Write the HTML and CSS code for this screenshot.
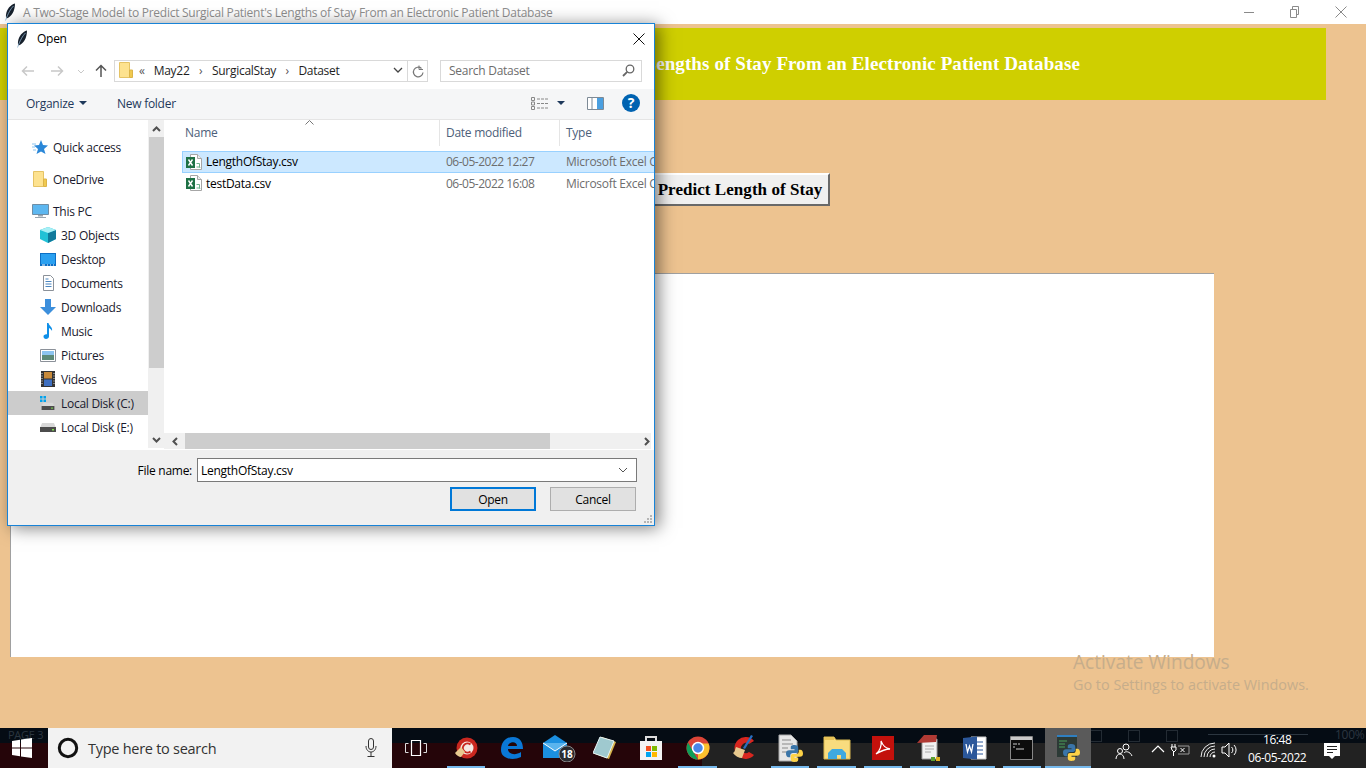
FILE: index.html
```html
<!DOCTYPE html>
<html>
<head>
<meta charset="utf-8">
<title>A Two-Stage Model to Predict Surgical Patient's Lengths of Stay From an Electronic Patient Database</title>
<link rel="stylesheet" href="styles.css">
</head>
<body>
<svg class="defs" width="0" height="0">
<symbol id="feather" viewBox="0 0 12 18"><path d="M11 .5C6.500 1.500 2.500 6.500 2 12c-.2 1.500 0 2.500.5 3.500C7.500 14 11 8 11 .5z" fill="#16202c"/><path d="M9.500 3C6.500 6 4 10.500 1.500 17.500" stroke="#8fb2d0" stroke-width=".8" fill="none"/></symbol>
<symbol id="folder" viewBox="0 0 14 16"><path d="M.5 .5h10v15H.5z" fill="#fde28f" stroke="#e5c365"/><path d="M10.500 8h3v7.500h-3z" fill="#f0c94f" stroke="#dcb448"/></symbol>
<symbol id="xls" viewBox="0 0 16 16"><path d="M4.500 .5h7l4 4v11h-11z" fill="#fff" stroke="#a6a6a6"/><path d="M11.500 .5v4h4" fill="#eee" stroke="#a6a6a6"/><path d="M0 3h9v11H0z" fill="#1e7145"/><path d="M2.500 5.500l4 6M6.500 5.500l-4 6" stroke="#fff" stroke-width="1.400"/><path d="M10.500 9.500h3v3.500h-3M13.500 13l.6 1" stroke="#6fb28c" fill="none"/></symbol>
<symbol id="drive" viewBox="0 0 16 10"><path d="M2 1h12l2 5H0z" fill="#d8d8d8"/><path d="M0 5h16v5H0z" fill="#4c4c4c"/><path d="M12 7h2v1.500h-2z" fill="#7de04c"/></symbol>
<symbol id="pyblob" viewBox="0 0 16 16"><path d="M8 0C5 0 4.500 1 4.500 2.500V4H8v1H3C1 5 0 6 0 8s1 3.500 2.500 3.500H4V10c0-1.500 1-2.500 2.500-2.500h3c1.200 0 2-.8 2-2V2.500C11.500 1 10.500 0 8 0z" fill="#3a75a8"/><path d="M8 16c3 0 3.500-1 3.500-2.500V12H8v-1h5c2 0 3-1 3-3s-1-3.500-2.500-3.500H12V6c0 1.500-1 2.500-2.500 2.500h-3c-1.200 0-2 .8-2 2v3C4.500 15 5.500 16 8 16z" fill="#fdd247"/></symbol>
</svg>

<div class="screen">
  <div class="titlebar">
    <svg class="tb-feather"><use href="#feather"/></svg>
    <span class="tb-title">A Two-Stage Model to Predict Surgical Patient's Lengths of Stay From an Electronic Patient Database</span>
    <div class="wincontrols">
      <svg width="12" height="12" viewBox="0 0 12 12"><path d="M1 6.500h10" stroke="#8a8a8a"/></svg>
      <svg width="12" height="12" viewBox="0 0 12 12"><path d="M1.500 3.500h6v8h-6zM3.500 3.500V.5h6v8h-2" stroke="#8a8a8a" fill="none"/></svg>
      <svg width="12" height="12" viewBox="0 0 12 12"><path d="M.5 .5l11 11M11.500 .5l-11 11" stroke="#8a8a8a"/></svg>
    </div>
  </div>

  <div class="app">
    <div class="banner">A Two-Stage Model to Predict Surgical Patient's Lengths of Stay From an Electronic Patient Database</div>
    <div class="btnrow"><button class="tkbtn">Predict Length of Stay</button></div>
    <div class="output"></div>
    <div class="watermark">
      <div class="wm-big">Activate Windows</div>
      <div class="wm-small">Go to Settings to activate Windows.</div>
    </div>
  </div>

  <div class="taskbar">
    <div class="ghost">
      <span class="ghost-page">PAGE 3</span>
      <span class="ghost-zoom">
        <i class="ghost-box"></i><i class="ghost-box"></i><i class="ghost-box"></i>
        <i class="ghost-slider"></i>
        <b>100%</b>
      </span>
    </div>
    <div class="start">
      <svg width="20" height="20" viewBox="0 0 20 20"><path d="M0 3l8-1.200V9.500H0zM9 1.600L20 0v9.500H9zM0 10.500h8v7.700L0 17zM9 10.500h11V20L9 18.400z" fill="#fff"/></svg>
    </div>
    <div class="searchbox">
      <svg width="22" height="22" viewBox="0 0 22 22"><circle cx="11" cy="11" r="8.700" fill="none" stroke="#111" stroke-width="3"/></svg>
      <span class="search-text">Type here to search</span>
      <svg class="mic" width="12" height="20" viewBox="0 0 12 20"><rect x="3.500" y=".5" width="5" height="11" rx="2.500" fill="none" stroke="#333"/><path d="M1 8c0 8 10 8 10 0M6 14v4M2.500 18.500h7" fill="none" stroke="#333"/></svg>
    </div>
    <div class="taskview">
      <svg width="22" height="18" viewBox="0 0 22 18"><path d="M6.500 1.500h9v15h-9z" fill="none" stroke="#fff" stroke-width="1.200"/><path d="M3.500 4.500H.5v9h3M18.500 4.500h3v9h-3" fill="none" stroke="#ddd"/></svg>
    </div>
    <div class="apps">
      <div class="app-icon open">
        <svg width="24" height="24" viewBox="0 0 24 24"><circle cx="13" cy="12" r="10.500" fill="#c9271f"/><circle cx="13" cy="12" r="6.500" fill="#f4e9e4"/><path d="M16.500 8.500a4.600 4.600 0 1 0 0 7" fill="none" stroke="#c9271f" stroke-width="2"/><path d="M1 17l6-6 4 5-4 5c-2 0-5-2-6-4z" fill="#e8c98f"/></svg>
      </div>
      <div class="app-icon">
        <svg width="24" height="24" viewBox="0 0 24 24"><path d="M1 14C1 6 6 1 13 1c7 0 10 5 10 12H8c0 5 7 7 13 3v5c-8 4-20 2-20-7zm7-4h9c0-5-8-5-9 0z" fill="#0a78d7"/></svg>
      </div>
      <div class="app-icon">
        <svg width="34" height="28" viewBox="0 0 34 28"><path d="M1 9l12-8 12 8v15H1z" fill="#1b8fe0"/><path d="M1 9l12 8 12-8" fill="#5ab4ee" stroke="#fff"/><circle cx="25" cy="20" r="8" fill="#2b2b30" stroke="#888"/><text x="25" y="24" class="badge" text-anchor="middle">18</text></svg>
      </div>
      <div class="app-icon">
        <svg width="24" height="24" viewBox="0 0 24 24"><path d="M9 1l14 5-7 17L2 18z" fill="#d9b64f"/><path d="M7 1l14 4-7 17L0 17z" fill="#9fc9cf" stroke="#e8f4f5"/></svg>
      </div>
      <div class="app-icon">
        <svg width="24" height="26" viewBox="0 0 24 26"><path d="M7 7V2h10v5" fill="none" stroke="#ddd" stroke-width="2"/><path d="M1 6h22v19H1z" fill="#f3f3f3"/><path d="M7 11h5v5H7z" fill="#f25022"/><path d="M13 11h5v5h-5z" fill="#7fba00"/><path d="M7 17h5v5H7z" fill="#00a4ef"/><path d="M13 17h5v5h-5z" fill="#ffb900"/></svg>
      </div>
      <div class="app-icon open">
        <svg width="24" height="24" viewBox="0 0 24 24"><circle cx="12" cy="12" r="11.500" fill="#db4437"/><path d="M12 23.500A11.500 11.500 0 0 0 22.500 7.500H12z" fill="#fbc02d"/><path d="M12 23.500A11.500 11.500 0 0 1 2 6.500L8 17z" fill="#0f9d58"/><circle cx="12" cy="12" r="5.500" fill="#4a86e8" stroke="#fff" stroke-width="1.500"/></svg>
      </div>
      <div class="app-icon">
        <svg width="26" height="26" viewBox="0 0 26 26"><path d="M23 6a11 11 0 1 0 0 14l-5-3a5 5 0 1 1 0-8z" fill="#d8261f"/><path d="M20 0l2 1-8 13-2-1z" fill="#2a6fc0"/><path d="M5 12l9 3-3 8c-3 0-7-2-9-5 2-1 2-4 3-6z" fill="#e8c98f"/></svg>
      </div>
      <div class="app-icon open">
        <svg width="26" height="28" viewBox="0 0 26 28"><path d="M2 1h12l6 6v20H2z" fill="#e6e6e6" stroke="#aaa"/><path d="M5 6h9M5 10h11M5 14h6M5 18h6" stroke="#8a8a8a"/><svg x="9" y="11" width="17" height="17"><use href="#pyblob"/></svg></svg>
      </div>
      <div class="app-icon open">
        <svg width="28" height="24" viewBox="0 0 28 24"><path d="M1 1h10l2 3h14v19H1z" fill="#f9dc7e" stroke="#d9b850"/><path d="M1 1h10v3H1z" fill="#e8c358"/><path d="M9 13h10l4 4v6h-5v-4h-4v4H5v-6z" fill="#3fa9e0"/></svg>
      </div>
      <div class="app-icon open">
        <svg width="22" height="24" viewBox="0 0 22 24"><path d="M0 0h22v24H0z" fill="#c3110c"/><path d="M4 18c4-3 6-9 5-13 2 5 4 7 9 8-5 0-9 2-14 5z" fill="none" stroke="#fff" stroke-width="1.300"/></svg>
      </div>
      <div class="app-icon open">
        <svg width="26" height="28" viewBox="0 0 26 28"><path d="M6 5h15v20H6z" fill="#f1f1f1" stroke="#999"/><path d="M9 12h9M9 15h9M9 18h6" stroke="#aaa"/><path d="M1 9L8 1h13l-1 7z" fill="#b03a34"/><path d="M15 23h4v4h-4z" fill="#5a9e2f"/><path d="M20 23h4v4h-4z" fill="#e0b020"/></svg>
      </div>
      <div class="app-icon open">
        <svg width="24" height="24" viewBox="0 0 24 24"><path d="M8 1h15v22H8z" fill="#fff" stroke="#ccc"/><path d="M12 6h8M12 10h8M12 14h8M12 18h8" stroke="#2b579a"/><path d="M0 2l14-1.500v23L0 22z" fill="#2b579a"/><path d="M3 8l1.500 8 2-6 2 6L10 8" fill="none" stroke="#fff" stroke-width="1.300"/></svg>
      </div>
      <div class="app-icon open">
        <svg width="23" height="24" viewBox="0 0 23 24"><path d="M.5 .5h22v23H.5z" fill="#0c0c0c" stroke="#888"/><path d="M1 1h21v3H1z" fill="#c9c9c9"/><path d="M3 8h4M8 8h2M3 11h2M6 13h8" stroke="#ccc"/></svg>
      </div>
      <div class="app-icon open active">
        <svg width="24" height="28" viewBox="0 0 24 28"><path d="M1 1h20v22H1z" fill="#2c3a36"/><path d="M1 1h20v2H1z" fill="#2f7fc0"/><path d="M3 7h8M3 10h6M3 13h6" stroke="#4aa05a"/><svg x="7" y="10" width="17" height="17"><use href="#pyblob"/></svg></svg>
      </div>
    </div>
    <div class="tray">
      <svg class="tray-people" width="18" height="18" viewBox="0 0 18 18"><circle cx="11" cy="5" r="3" fill="none" stroke="#fff"/><circle cx="5" cy="9" r="2.500" fill="none" stroke="#fff"/><path d="M1 17c0-3 2-5 4-5s4 2 4 5M9 11c1-2 6-2 8 3" fill="none" stroke="#fff"/></svg>
      <svg class="tray-caret" width="14" height="8" viewBox="0 0 14 8"><path d="M1 7l6-6 6 6" fill="none" stroke="#fff" stroke-width="1.200"/></svg>
      <svg class="tray-batt" width="20" height="14" viewBox="0 0 20 14"><path d="M2 1v3M5 1v3M1 4h5v3l-2 2-2-2zM3.500 9v4" fill="none" stroke="#fff"/><path d="M8 3h11v8H8" fill="none" stroke="#999"/><path d="M10.500 5l4 4M14.500 5l-4 4" stroke="#fff"/></svg>
      <svg class="tray-wifi" width="16" height="16" viewBox="0 0 16 16"><path d="M1 15A14 14 0 0 1 15 1M4 15A11 11 0 0 1 15 4M7 15a8 8 0 0 1 8-8M10 15a5 5 0 0 1 5-5" fill="none" stroke="#eee"/><circle cx="14" cy="14" r="1.500" fill="#fff"/></svg>
      <svg class="tray-vol" width="18" height="16" viewBox="0 0 18 16"><path d="M1 5h3l4-4v14l-4-4H1z" fill="none" stroke="#fff"/><path d="M10.500 5a4 4 0 0 1 0 6M13 3a7 7 0 0 1 0 10" fill="none" stroke="#fff"/></svg>
      <div class="clock"><span>16:48</span><span>06-05-2022</span></div>
      <svg class="tray-action" width="16" height="17" viewBox="0 0 16 17"><path d="M0 0h16v13h-5l-3 3-3-3H0z" fill="#fff"/><path d="M3 3.500h10M3 6.500h10M3 9.500h6" stroke="#222"/></svg>
    </div>
  </div>

  <div class="dialog">
    <div class="dlg-title">
      <svg class="dlg-feather"><use href="#feather"/></svg>
      <span class="dlg-name">Open</span>
      <svg class="dlg-close" width="12" height="12" viewBox="0 0 12 12"><path d="M.5 .5l11 11M11.500 .5l-11 11" stroke="#111"/></svg>
    </div>
    <div class="dlg-nav">
      <svg class="nav-back" width="14" height="12" viewBox="0 0 14 12"><path d="M13 6H2M6 1.500L1.500 6 6 10.500" fill="none" stroke="#c8c8c8" stroke-width="1.500"/></svg>
      <svg class="nav-fwd" width="14" height="12" viewBox="0 0 14 12"><path d="M1 6h11M8 1.500L12.500 6 8 10.500" fill="none" stroke="#c8c8c8" stroke-width="1.500"/></svg>
      <svg class="nav-drop" width="8" height="5" viewBox="0 0 8 5"><path d="M1 1l3 3 3-3" fill="none" stroke="#c8c8c8"/></svg>
      <svg class="nav-up" width="12" height="14" viewBox="0 0 12 14"><path d="M6 13V2M1 6.500L6 1.500l5 5" fill="none" stroke="#555" stroke-width="1.500"/></svg>
      <div class="address">
        <svg class="addr-folder" width="14" height="16"><use href="#folder"/></svg>
        <span class="crumb-more">«</span>
        <span>May22</span><span class="crumb-sep">›</span>
        <span>SurgicalStay</span><span class="crumb-sep">›</span>
        <span>Dataset</span>
        <svg class="addr-chev" width="10" height="6" viewBox="0 0 10 6"><path d="M1 1l4 4 4-4" fill="none" stroke="#444" stroke-width="1.300"/></svg>
        <div class="addr-refresh">
          <svg width="12" height="13" viewBox="0 0 12 13"><path d="M9.500 3.500a4.800 4.800 0 1 0 1.500 4" fill="none" stroke="#777" stroke-width="1.200"/><path d="M7 .5v4h4" fill="none" stroke="#777"/></svg>
        </div>
      </div>
      <div class="searchfield">
        <span>Search Dataset</span>
        <svg width="13" height="13" viewBox="0 0 13 13"><circle cx="8" cy="5" r="3.800" fill="none" stroke="#666" stroke-width="1.300"/><path d="M5.200 7.800L1 12" stroke="#666" stroke-width="1.800"/></svg>
      </div>
    </div>
    <div class="dlg-tools">
      <span class="tool-org">Organize</span><i class="caret"></i>
      <span class="tool-new">New folder</span>
      <svg class="tool-view" width="17" height="13" viewBox="0 0 17 13"><path d="M.5 .5h3v3h-3zM.5 5h3v3h-3zM.5 9.500h3v3h-3z" fill="none" stroke="#888"/><path d="M6 2h11M6 6.500h11M6 11h11" stroke="#888" stroke-dasharray="3 1"/></svg>
      <i class="caret caret-view"></i>
      <svg class="tool-pane" width="17" height="13" viewBox="0 0 17 13"><path d="M.5 .5h16v12H.5z" fill="#fff" stroke="#7d8a96"/><path d="M10 1h6v11h-6z" fill="#4a9fe0"/><path d="M5 1v11" stroke="#7d8a96"/></svg>
      <div class="tool-help">?</div>
    </div>
    <div class="dlg-body">
      <div class="navpane">
        <div class="nav-list">
          <div class="nav-item top q">
            <svg width="16" height="16" viewBox="0 0 16 16"><path d="M9 1l2 5 5 .5-4 3.500 1.500 5L9 12.500 4.500 15 6 10 2 6.500 7 6z" fill="#2a87d8"/><path d="M0 5h4M0 8h3M1 11h3" stroke="#8cc4ef"/></svg>
            <span>Quick access</span>
          </div>
          <div class="nav-item top gap">
            <svg width="14" height="16"><use href="#folder"/></svg>
            <span>OneDrive</span>
          </div>
          <div class="nav-item top gap pc">
            <svg width="17" height="14" viewBox="0 0 17 14"><path d="M.5 .5h16v10H.5z" fill="#5db7f0" stroke="#6f8ea5"/><path d="M6 11h5v1.500H6zM3 13h11v1H3z" fill="#99a6b0"/></svg>
            <span>This PC</span>
          </div>
          <div class="nav-item">
            <svg width="16" height="16" viewBox="0 0 16 16"><path d="M8 0l8 3v9l-8 4-8-4V3z" fill="#22c1d6"/><path d="M8 6l8-3v9l-8 4z" fill="#107a9c"/><path d="M0 3l8 3 8-3-8-3z" fill="#a8eff5"/></svg>
            <span>3D Objects</span>
          </div>
          <div class="nav-item">
            <svg width="16" height="13" viewBox="0 0 16 13"><path d="M0 0h16v13H0z" fill="#0c6fc5"/><path d="M1 1h14v10H1z" fill="#2aa0f0"/><path d="M2 12h3M7 12h1M10 12h1M13 12h1" stroke="#fff"/></svg>
            <span>Desktop</span>
          </div>
          <div class="nav-item">
            <svg width="16" height="16" viewBox="0 0 16 16"><path d="M3.500 .5h7l3 3v12h-10z" fill="#fff" stroke="#8b9199"/><path d="M5.500 4h3M5.500 6.500h6M5.500 9h6M5.500 11.500h6" stroke="#4b86c0"/></svg>
            <span>Documents</span>
          </div>
          <div class="nav-item">
            <svg width="16" height="16" viewBox="0 0 16 16"><path d="M5 0h6v8h5l-8 8-8-8h5z" fill="#3c8fdc"/></svg>
            <span>Downloads</span>
          </div>
          <div class="nav-item">
            <svg width="16" height="16" viewBox="0 0 16 16"><path d="M7 0h1.500c.5 3 4.500 4 3.500 8-.5-1.500-2-2.500-3-3v8.500c0 1.500-1.500 2.500-3 2.500S3.500 15 3.500 13.500 5 11 7 11.300z" fill="#0f8fe8"/></svg>
            <span>Music</span>
          </div>
          <div class="nav-item">
            <svg width="16" height="13" viewBox="0 0 16 13"><path d="M.5 .5h15v12H.5z" fill="#fff" stroke="#8b9199"/><path d="M2 2h12v4H2z" fill="#8cc4ef"/><path d="M2 6h12v5H2z" fill="#5c8a78"/></svg>
            <span>Pictures</span>
          </div>
          <div class="nav-item">
            <svg width="14" height="16" viewBox="0 0 14 16"><path d="M0 0h14v16H0z" fill="#333"/><path d="M3 1h8v6.500H3z" fill="#c88a3a"/><path d="M3 8.500h8V15H3z" fill="#3e6fc0"/><path d="M1 2v12M13 2v12" stroke="#ddd" stroke-dasharray="1 1.500"/></svg>
            <span>Videos</span>
          </div>
          <div class="nav-item selected">
            <svg width="16" height="14" viewBox="0 0 16 14"><path d="M0 0h2.500v2.500H0zM3.500 0H6v2.500H3.500zM0 3.500h2.500V6H0zM3.500 3.500H6V6H3.500z" fill="#00a2ed"/><svg x="0" y="6" width="16" height="8"><use href="#drive"/></svg></svg>
            <span>Local Disk (C:)</span>
          </div>
          <div class="nav-item">
            <svg class="drive-e" width="16" height="10"><use href="#drive"/></svg>
            <span>Local Disk (E:)</span>
          </div>
        </div>
        <div class="vscroll">
          <svg class="arr" width="9" height="6" viewBox="0 0 9 6"><path d="M1 5l3.500-3.500L8 5" fill="none" stroke="#505050" stroke-width="2"/></svg>
          <div class="vthumb"></div>
          <svg class="arr arr-down" width="9" height="6" viewBox="0 0 9 6"><path d="M1 1l3.500 3.500L8 1" fill="none" stroke="#505050" stroke-width="2"/></svg>
        </div>
      </div>
      <div class="filepane">
        <div class="listhead">
          <svg class="sort" width="9" height="5" viewBox="0 0 9 5"><path d="M.5 4.500l4-4 4 4" fill="none" stroke="#777"/></svg>
          <div class="col-name">Name</div>
          <div class="col-date">Date modified</div>
          <div class="col-type">Type</div>
        </div>
        <div class="rows">
          <div class="filerow selected">
            <div class="col-name"><svg width="16" height="16"><use href="#xls"/></svg><span>LengthOfStay.csv</span></div>
            <div class="col-date">06-05-2022 12:27</div>
            <div class="col-type">Microsoft Excel C</div>
          </div>
          <div class="filerow">
            <div class="col-name"><svg width="16" height="16"><use href="#xls"/></svg><span>testData.csv</span></div>
            <div class="col-date">06-05-2022 16:08</div>
            <div class="col-type">Microsoft Excel C</div>
          </div>
        </div>
        <div class="hscroll">
          <svg class="harr" width="6" height="9" viewBox="0 0 6 9"><path d="M5 1L1.500 4.500 5 8" fill="none" stroke="#505050" stroke-width="2"/></svg>
          <div class="hthumb"></div>
          <svg class="harr harr-r" width="6" height="9" viewBox="0 0 6 9"><path d="M1 1l3.500 3.500L1 8" fill="none" stroke="#505050" stroke-width="2"/></svg>
        </div>
      </div>
    </div>
    <div class="dlg-foot">
      <div class="filename-row">
        <span class="fn-label">File name:</span>
        <div class="fn-input"><span>LengthOfStay.csv</span>
          <svg width="10" height="6" viewBox="0 0 10 6"><path d="M1 1l4 4 4-4" fill="none" stroke="#555"/></svg>
        </div>
      </div>
      <div class="btn-row">
        <button class="dlgbtn primary">Open</button>
        <button class="dlgbtn">Cancel</button>
      </div>
      <svg class="grip" width="10" height="10" viewBox="0 0 10 10"><path d="M7 1h2v2H7zM4 4h2v2H4zM7 4h2v2H7zM1 7h2v2H1zM4 7h2v2H4zM7 7h2v2H7z" fill="#b5b5b5"/></svg>
    </div>
  </div>
</div>
</body>
</html>
```

FILE: styles.css
```css
html,body{
margin:0;
padding:0;
height:100%;
overflow:hidden;
}
body{
font-family:"Open Sans","Noto Sans",sans-serif;
font-size:12px;
letter-spacing:-0.27px;
}
.defs{
position:absolute;
}
.screen{
position:relative;
width:1366px;
height:768px;
display:flex;
flex-direction:column;
overflow:hidden;
}

/* main window */
.titlebar{
height:24px;
background:#fff;
display:flex;
align-items:center;
flex:none;
}
.tb-feather{
width:12px;
height:18px;
margin-left:4px;
}
.tb-title{
margin-left:7px;
color:#8f8f8f;
}
.wincontrols{
margin-left:auto;
display:flex;
gap:34px;
padding-right:19px;
}
.app{
position:relative;
flex:1;
background:#edc390;
padding-top:4px;
}
.banner{
width:1326px;
height:72px;
background:#cfcf00;
color:#fff;
font-family:"Liberation Serif",serif;
font-weight:bold;
font-size:19px;
letter-spacing:.1px;
line-height:72px;
box-sizing:border-box;
padding-right:246px;
text-align:right;
white-space:nowrap;
}
.btnrow{
margin-top:73px;
padding-left:650px;
}
.tkbtn{
display:block;
width:180px;
height:33px;
padding:0;
font-family:"Liberation Serif",serif;
font-weight:bold;
font-size:17px;
letter-spacing:.05px;
color:#000;
background:#f0f0f0;
border:2px solid;
border-color:#fff #696969 #696969 #fff;
}
.output{
width:1203px;
height:383px;
margin:67px 0 0 10px;
background:#fff;
border-top:1px solid #a0a0a0;
border-left:1px solid #a0a0a0;
}
.watermark{
position:absolute;
left:1073px;
top:626px;
color:#c6ad8b;
letter-spacing:0;
}
.wm-big{
font-size:19.100px;
line-height:24px;
}
.wm-small{
font-size:14.400px;
line-height:22px;
}

/* taskbar */
.taskbar{
position:relative;
height:40px;
flex:none;
display:flex;
background:linear-gradient(#050c14 0,#050c14 15px,#222 15px,#222 100%);
}
.ghost{
position:absolute;
left:0;
right:0;
top:0;
height:15px;
color:#2c3640;
}
.ghost:after{
content:"";
position:absolute;
left:392px;
top:15px;
width:310px;
height:25px;
background:#250509;
}
.ghost-page{
position:absolute;
left:8px;
top:-1px;
font-size:11px;
}
.ghost-zoom{
position:absolute;
left:1096px;
top:0;
}
.ghost-box{
position:absolute;
top:2px;
width:10px;
height:10px;
border:1px solid #232b33;
}
.ghost-box:nth-child(1){left:-6px;}
.ghost-box:nth-child(2){left:32px;}
.ghost-box:nth-child(3){left:70px;}
.ghost-slider{
position:absolute;
left:112px;
top:6px;
width:100px;
height:1px;
background:#2c3640;
}
.ghost-zoom b{
position:absolute;
left:239px;
top:-2px;
font-weight:normal;
}
.start{
position:relative;
width:48px;
display:flex;
align-items:center;
justify-content:center;
background:linear-gradient(transparent 15px,#250509 15px);
}
.start svg{
margin-left:-4px;
}
.searchbox{
position:relative;
width:344px;
background:#f2f2f2;
display:flex;
align-items:center;
padding-left:9px;
box-sizing:border-box;
}
.search-text{
margin-left:9px;
font-size:14.500px;
color:#333;
}
.mic{
margin-left:auto;
margin-right:15px;
}
.taskview{
position:relative;
width:51px;
display:flex;
align-items:center;
justify-content:center;
}
.taskview svg{
margin-right:3px;
}
.apps{
position:relative;
display:flex;
}
.app-icon{
width:46.300px;
height:40px;
display:flex;
align-items:center;
justify-content:center;
position:relative;
box-sizing:border-box;
}
.app-icon.open:after{
content:"";
position:absolute;
left:4px;
right:4px;
bottom:0;
height:2px;
background:#76b9ed;
}
.app-icon.active{
background:#5a5a5a;
}
.app-icon.active:after{
left:0;
right:0;
}
.badge{
font-size:10px;
font-weight:bold;
fill:#fff;
letter-spacing:0;
}
.tray{
position:relative;
flex:1;
margin-left:-1px;
display:flex;
align-items:center;
}
.tray svg{
position:absolute;
}
.tray-people{left:25px;top:14px;}
.tray-caret{left:61px;top:17px;}
.tray-batt{left:80px;top:15px;}
.tray-wifi{left:110px;top:14px;}
.tray-vol{left:131px;top:14px;}
.tray-action{left:234px;top:15px;}
.clock{
position:absolute;
left:147px;
top:3px;
width:80px;
display:flex;
flex-direction:column;
align-items:center;
color:#fff;
line-height:18px;
letter-spacing:-0.45px;
}

/* open dialog */
.dialog{
position:absolute;
left:7px;
top:23px;
width:648px;
height:503px;
box-sizing:border-box;
border:1px solid #1883d7;
background:#fff;
box-shadow:4px 2px 16px rgba(0,0,0,.5);
display:flex;
flex-direction:column;
color:#000;
}
.dlg-title{
height:29px;
display:flex;
align-items:center;
flex:none;
}
.dlg-feather{
width:12px;
height:18px;
margin-left:8px;
}
.dlg-name{
margin-left:9px;
}
.dlg-close{
margin-left:auto;
margin-right:9px;
}
.dlg-nav{
position:relative;
height:36px;
flex:none;
display:flex;
align-items:flex-start;
}
.dlg-nav>svg{
position:absolute;
top:12px;
}
.nav-back{left:13px;}
.nav-fwd{left:42px;}
.dlg-nav .nav-drop{left:69px;top:16px;}
.dlg-nav .nav-up{left:87px;top:11px;}
.address{
position:absolute;
left:106px;
top:7px;
width:314px;
height:22px;
box-sizing:border-box;
border:1px solid #d9d9d9;
padding-bottom:2px;
display:flex;
align-items:center;
color:#1e1e1e;
}
.addr-folder{
margin-left:4px;
}
.crumb-more{
margin:0 9px 0 6px;
color:#555;
}
.crumb-sep{
margin:0 9.500px;
color:#555;
}
.addr-chev{
margin-left:auto;
margin-right:4px;
}
.addr-refresh{
width:19px;
height:20px;
margin-bottom:-2px;
border-left:1px solid #d9d9d9;
display:flex;
align-items:center;
justify-content:center;
}
.searchfield{
position:absolute;
left:432px;
top:7px;
width:202px;
height:22px;
box-sizing:border-box;
border:1px solid #d9d9d9;
padding:0 6px 2px 8px;
display:flex;
align-items:center;
justify-content:space-between;
color:#6d6d6d;
}
.dlg-tools{
position:relative;
height:31px;
flex:none;
box-sizing:border-box;
background:#f5f6f7;
border-bottom:1px solid #e5e5e5;
padding-bottom:2px;
display:flex;
align-items:center;
color:#1e395b;
}
.tool-org{
margin-left:18px;
}
.caret{
width:0;
height:0;
margin-left:5px;
border-left:4px solid transparent;
border-right:4px solid transparent;
border-top:4px solid #1e395b;
}
.tool-new{
margin-left:30px;
}
.tool-view{
margin-left:auto;
}
.caret-view{
margin-left:9px;
}
.tool-pane{
margin-left:22px;
}
.tool-help{
width:18px;
height:18px;
margin:0 14px 0 18px;
border-radius:50%;
background:#0063b1;
color:#fff;
font-weight:bold;
font-size:14px;
line-height:18px;
text-align:center;
}
.dlg-body{
height:330px;
flex:none;
display:flex;
overflow:hidden;
}
.navpane{
width:156px;
flex:none;
display:flex;
}
.nav-list{
width:140px;
flex:none;
padding-top:15px;
color:#1a1a2e;
}
.nav-item{
height:24px;
display:flex;
align-items:center;
padding-left:32px;
box-sizing:border-box;
}
.nav-item svg{
width:16px;
flex:none;
}
.nav-item span{
margin-left:5px;
}
.nav-item.top{
padding-left:24px;
}
.nav-item.top span{
margin-left:5px;
}
.nav-item.top.gap{
margin-top:8px;
}
.nav-item.pc svg{
width:17px;
}
.nav-item.top.pc span{
margin-left:4px;
}
.nav-item.selected{
background:#cccccc;
}
.vscroll{
width:16px;
background:#f0f0f0;
position:relative;
display:flex;
flex-direction:column;
align-items:center;
height:328px;
}
.arr{
position:absolute;
top:6px;
}
.arr-down{
top:317px;
}
.vthumb{
position:absolute;
top:17px;
width:15px;
height:231px;
background:#cdcdcd;
}
.filepane{
flex:1;
position:relative;
min-width:0;
}
.listhead{
position:relative;
height:31px;
display:flex;
color:#4c607a;
line-height:26px;
}
.sort{
position:absolute;
left:141px;
top:0;
}
.col-name{
width:275px;
box-sizing:border-box;
padding-left:21px;
display:flex;
flex:none;
align-items:center;
}
.listhead .col-name{
height:26px;
}
.col-date{
width:120px;
box-sizing:border-box;
padding-left:6px;
flex:none;
}
.col-type{
padding-left:6px;
white-space:nowrap;
}
.listhead .col-date,.listhead .col-type{
border-left:1px solid #e5e5e5;
height:26px;
padding-left:6px;
}
.rows{
overflow:hidden;
}
.filerow{
height:21px;
display:flex;
align-items:center;
line-height:19px;
margin-left:18px;
box-sizing:border-box;
border:1px solid transparent;
border-right:0;
padding-bottom:1px;
width:473px;
color:#6d6d6d;
white-space:nowrap;
overflow:hidden;
}
.filerow .col-date{
letter-spacing:-0.5px;
}
.filerow.selected{
background:#cce8ff;
border-color:#99d1ff;
height:22px;
}
.filerow .col-name{
color:#000;
width:257px;
padding-left:3px;
}
.filerow .col-name span{
margin-left:4px;
}
.hscroll{
position:absolute;
left:0;
right:3px;
top:313px;
height:16px;
background:#f0f0f0;
}
.hthumb{
position:absolute;
left:21px;
width:365px;
height:16px;
background:#cdcdcd;
}
.harr{
position:absolute;
left:8px;
top:4px;
}
.harr-r{
left:480px;
}
.dlg-foot{
flex:1;
position:relative;
background:#f0f0f0;
}
.filename-row{
display:flex;
align-items:center;
padding-top:8px;
}
.fn-label{
width:184px;
text-align:right;
flex:none;
}
.fn-input{
width:440px;
height:24px;
margin-left:5px;
box-sizing:border-box;
border:1px solid #7a7a7a;
background:#fff;
display:flex;
align-items:center;
justify-content:space-between;
padding:0 8px 0 3px;
}
.btn-row{
display:flex;
justify-content:flex-end;
gap:14px;
margin-top:5px;
padding-right:18px;
}
.dlgbtn{
width:86px;
height:24px;
padding:0;
font-family:inherit;
font-size:12px;
letter-spacing:inherit;
color:#000;
background:#e1e1e1;
border:1px solid #adadad;
}
.dlgbtn.primary{
border:2px solid #0078d7;
}
.grip{
position:absolute;
right:1px;
bottom:1px;
}
```
